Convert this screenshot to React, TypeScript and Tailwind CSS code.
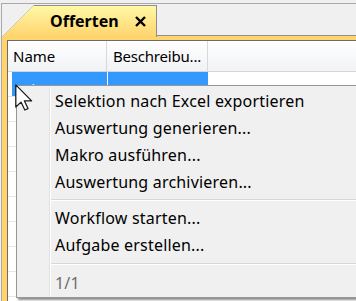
import React from "react";

const font = { fontFamily: '"Noto Sans", "Open Sans", sans-serif' };

function Cursor() {
  return (
    <svg
      className="absolute left-[15px] top-[84px]"
      width="19"
      height="27"
      viewBox="0 0 12 17"
    >
      <polygon
        points="0.5,0.5 0.5,14.5 3.8,11.4 6.2,16.4 8.2,15.5 5.9,10.6 10.5,10.6"
        fill="#ffffff"
        stroke="#1a1a1a"
        strokeWidth="0.8"
        strokeLinejoin="round"
      />
    </svg>
  );
}

function Item({ label, muted }: { label: string; muted?: boolean }) {
  return (
    <div className="flex h-[27px] items-center">
      <div className="w-[32px] shrink-0 self-stretch" />
      <div className="w-px shrink-0 self-stretch bg-[#e0e0e0]" />
      <div className="w-px shrink-0 self-stretch bg-white" />
      <span
        className={
          "pl-[4px] text-[16px] tracking-[0.2px] whitespace-nowrap " +
          (muted ? "text-[#6d6d6d]" : "text-black")
        }
      >
        {label}
      </span>
    </div>
  );
}

function Sep({ tall }: { tall?: boolean }) {
  return (
    <div className={"flex " + (tall ? "h-[11px]" : "h-[9px]")}>
      <div className="w-[32px] shrink-0" />
      <div className="w-px shrink-0 bg-[#e0e0e0]" />
      <div className="w-px shrink-0 bg-white" />
      <div className="flex flex-1 flex-col justify-center">
        <div className="h-px bg-[#d7d7d7]" />
        <div className="h-px bg-white" />
      </div>
    </div>
  );
}

function GridRow() {
  return (
    <div className="flex h-[25px] border-b border-[#e6e6e6]">
      <div className="w-[100px] border-r border-[#e6e6e6]" />
      <div className="flex-1" />
    </div>
  );
}

export default function App() {
  return (
    <div
      className="relative h-[301px] w-[356px] overflow-hidden bg-[#f0f0f0]"
      style={font}
    >
      <div className="flex h-full flex-col pt-[3px] pl-[1px]">
        <div className="flex flex-1 flex-col border-l border-t border-[#a9a9a9]">
          {/* tab strip */}
          <div className="flex h-[33px]">
            <div className="relative mt-[1px] h-[32px] w-[155px] bg-[#8f8f8f] [clip-path:polygon(32px_0,100%_0,100%_100%,0_100%,0_32px)]">
              <div className="absolute left-0 top-[1px] right-[1px] bottom-0 bg-gradient-to-b from-[#fff8a6] to-[#ffd46c] [clip-path:polygon(31px_0,100%_0,100%_100%,0_100%,0_31px)]">
                <div className="flex h-full items-center pl-[48px] pb-[1px]">
                  <span className="text-[16px] font-bold text-black">Offerten</span>
                  <svg
                    className="ml-[16px]"
                    width="11"
                    height="11"
                    viewBox="0 0 11 11"
                  >
                    <path
                      d="M1 1 L10 10 M10 1 L1 10"
                      stroke="#000"
                      strokeWidth="2.4"
                    />
                  </svg>
                </div>
              </div>
            </div>
            <div className="flex flex-1 flex-col">
              <div className="flex-1" />
              <div className="h-px bg-[#8f8f8f]" />
              <div className="h-px bg-[#ffd46c]" />
            </div>
          </div>
          {/* yellow frame */}
          <div className="flex flex-1 flex-col bg-[#ffd46c] pt-[3px] pl-[5px]">
            <div className="flex flex-1 flex-col border-l border-t border-[#6b6b6b] bg-white">
              {/* header */}
              <div className="flex h-[31px] border-b border-[#d5d5d5] bg-gradient-to-b from-white to-[#f1f2f4] text-[15px] text-black">
                <div className="flex w-[99px] items-center border-r border-[#d9d9d9] pl-[5px]">
                  Name
                </div>
                <div className="flex w-[101px] items-center border-r border-[#d9d9d9] pl-[6px] whitespace-nowrap tracking-[-0.2px]">
                  Beschreibu...
                </div>
                <div className="flex-1" />
              </div>
              {/* selected row */}
              <div className="flex h-[25px] border-b border-[#e6e6e6] pl-[4px] text-[15px] text-white">
                <div className="flex w-[95px] items-start bg-[#3399ff] pl-[3px] pt-[6px]">
                  Leistungen
                </div>
                <div className="w-px bg-white" />
                <div className="flex w-[100px] items-start bg-[#3399ff] pl-[6px] pt-[6px]">
                  Neu
                </div>
              </div>
              <div className="flex flex-col">
                <GridRow />
                <GridRow />
                <GridRow />
                <GridRow />
                <GridRow />
                <GridRow />
                <GridRow />
                <GridRow />
              </div>
            </div>
          </div>
        </div>
      </div>

      {/* context menu */}
      <div className="absolute left-[16px] top-[85px] w-[350px] border border-[#979797] bg-[#f0f0f0] pt-[1px] pb-[1px] shadow-[2px_2px_2px_rgba(0,0,0,0.45)]">
        <Item label="Selektion nach Excel exportieren" />
        <Item label="Auswertung generieren..." />
        <Item label="Makro ausführen..." />
        <Item label="Auswertung archivieren..." />
        <Sep />
        <Item label="Workflow starten..." />
        <Item label="Aufgabe erstellen..." />
        <Sep tall />
        <Item label="1/1" muted />
      </div>

      <Cursor />
    </div>
  );
}
